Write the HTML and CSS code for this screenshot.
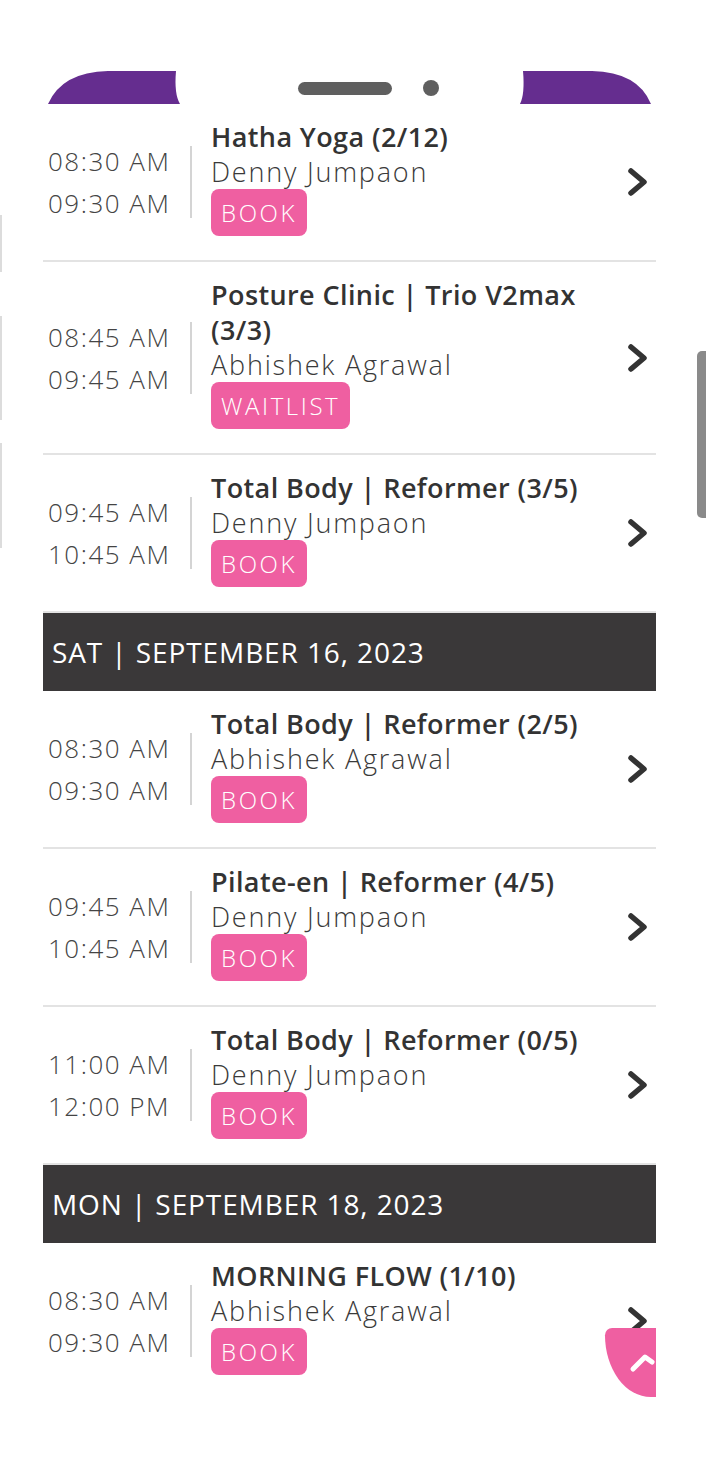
FILE: index.html
```html
<!DOCTYPE html>
<html lang="en">
<head>
  <meta charset="UTF-8">
  <title>Class Schedule</title>
  <link rel="stylesheet" href="styles.css">
</head>
<body>

  <div class="notch">
    <svg width="706" height="104" viewBox="0 0 706 104">
      <path d="M48 104 Q62 72 108 71 L176 71 Q174 94 180 104 Z" fill="#652d8f"/>
      <path d="M520 104 Q525 94 523 71 L592 71 Q638 72 651 104 Z" fill="#652d8f"/>
      <rect x="298" y="82" width="94" height="13" rx="6.5" fill="#5f5f5f"/>
      <circle cx="431" cy="88" r="8" fill="#5f5f5f"/>
    </svg>
  </div>

  <span class="side-line one"></span>
  <span class="side-line two"></span>
  <span class="side-line three"></span>
  <span class="scrollbar"></span>

  <div class="schedule">

    <div class="row">
      <div class="time"><span>08:30 AM</span><span>09:30 AM</span></div>
      <div class="info">
        <div class="title">Hatha Yoga (2/12)</div>
        <div class="teacher">Denny Jumpaon</div>
        <a class="btn">BOOK</a>
      </div>
      <svg class="chev" viewBox="0 0 24 30"><path d="M5 4 L18 15 L5 26" /></svg>
    </div>

    <div class="row">
      <div class="time"><span>08:45 AM</span><span>09:45 AM</span></div>
      <div class="info">
        <div class="title">Posture Clinic | Trio V2max (3/3)</div>
        <div class="teacher">Abhishek Agrawal</div>
        <a class="btn">WAITLIST</a>
      </div>
      <svg class="chev" viewBox="0 0 24 30"><path d="M5 4 L18 15 L5 26" /></svg>
    </div>

    <div class="row">
      <div class="time"><span>09:45 AM</span><span>10:45 AM</span></div>
      <div class="info">
        <div class="title">Total Body | Reformer (3/5)</div>
        <div class="teacher">Denny Jumpaon</div>
        <a class="btn">BOOK</a>
      </div>
      <svg class="chev" viewBox="0 0 24 30"><path d="M5 4 L18 15 L5 26" /></svg>
    </div>

    <div class="day">SAT | SEPTEMBER 16, 2023</div>

    <div class="row">
      <div class="time"><span>08:30 AM</span><span>09:30 AM</span></div>
      <div class="info">
        <div class="title">Total Body | Reformer (2/5)</div>
        <div class="teacher">Abhishek Agrawal</div>
        <a class="btn">BOOK</a>
      </div>
      <svg class="chev" viewBox="0 0 24 30"><path d="M5 4 L18 15 L5 26" /></svg>
    </div>

    <div class="row">
      <div class="time"><span>09:45 AM</span><span>10:45 AM</span></div>
      <div class="info">
        <div class="title">Pilate-en | Reformer (4/5)</div>
        <div class="teacher">Denny Jumpaon</div>
        <a class="btn">BOOK</a>
      </div>
      <svg class="chev" viewBox="0 0 24 30"><path d="M5 4 L18 15 L5 26" /></svg>
    </div>

    <div class="row">
      <div class="time"><span>11:00 AM</span><span>12:00 PM</span></div>
      <div class="info">
        <div class="title">Total Body | Reformer (0/5)</div>
        <div class="teacher">Denny Jumpaon</div>
        <a class="btn">BOOK</a>
      </div>
      <svg class="chev" viewBox="0 0 24 30"><path d="M5 4 L18 15 L5 26" /></svg>
    </div>

    <div class="day">MON | SEPTEMBER 18, 2023</div>

    <div class="row last">
      <div class="time"><span>08:30 AM</span><span>09:30 AM</span></div>
      <div class="info">
        <div class="title">MORNING FLOW (1/10)</div>
        <div class="teacher">Abhishek Agrawal</div>
        <a class="btn">BOOK</a>
      </div>
      <svg class="chev" viewBox="0 0 24 30"><path d="M5 4 L18 15 L5 26" /></svg>
    </div>

  </div>

  <div class="to-top">
    <svg width="51" height="69" viewBox="0 0 51 69"><path d="M28 41 L40 29 L47 34" /></svg>
  </div>

</body>
</html>
```

FILE: styles.css
```css
body {
  margin: 0;
  font-family: "Open Sans", "Liberation Sans", sans-serif;
  color: #333;
  background: #fff;
  position: relative;
  min-height: 1468px;
}

.notch {
  height: 104px;
}

.notch svg {
  display: block;
}

.schedule {
  width: 613px;
  margin-left: 43px;
}

.row {
  display: flex;
  align-items: center;
  border-bottom: 2px solid #e3e3e3;
}

.row.last {
  border-bottom: none;
}

/* start / end time, with the thin rule on its right */
.time {
  width: 142px;
  padding-left: 5px;
  border-right: 2px solid #d4d4d4;
  display: flex;
  flex-direction: column;
  gap: 12px;
  font-size: 26px;
  font-weight: 300;
  line-height: 30px;
  letter-spacing: 1.5px;
  color: #444;
  white-space: nowrap;
}

.info {
  flex: 1;
  margin-left: 19px;
  padding: 15px 0 24px;
}

.title {
  font-size: 27px;
  font-weight: 600;
  line-height: 35px;
  letter-spacing: 0.4px;
  color: #333;
}

.teacher {
  font-size: 27px;
  font-weight: 300;
  line-height: 35px;
  letter-spacing: 1.8px;
  color: #3a3a3a;
}

.btn {
  display: inline-block;
  height: 47px;
  line-height: 47px;
  padding: 0 10px;
  border-radius: 8px;
  background: #ef5fa1;
  color: #fff;
  font-size: 24px;
  font-weight: 300;
  letter-spacing: 2.6px;
}

.chev {
  width: 24px;
  height: 30px;
  margin-right: 6px;
  fill: none;
  stroke: #333;
  stroke-width: 5.5;
  stroke-linecap: round;
  stroke-linejoin: round;
}

.day {
  height: 78px;
  line-height: 78px;
  padding-left: 9px;
  background: #3a3839;
  color: #fff;
  font-size: 28px;
  letter-spacing: 0.9px;
}

.side-line {
  position: absolute;
  left: 0;
  width: 2px;
  background: #dcdcdc;
}

.side-line.one { top: 215px; height: 57px; }
.side-line.two { top: 316px; height: 104px; }
.side-line.three { top: 443px; height: 105px; }

.scrollbar {
  position: absolute;
  right: 0;
  top: 351px;
  width: 9px;
  height: 167px;
  background: #8a8a8a;
  border-radius: 5px 0 0 5px;
}

.to-top {
  position: absolute;
  left: 605px;
  top: 1328px;
  width: 51px;
  height: 69px;
  background: #ef5fa1;
  border-top-left-radius: 8px;
  border-bottom-left-radius: 51px 69px;
}

.to-top svg {
  display: block;
  fill: none;
  stroke: #fff;
  stroke-width: 5;
  stroke-linecap: round;
  stroke-linejoin: round;
}
```
